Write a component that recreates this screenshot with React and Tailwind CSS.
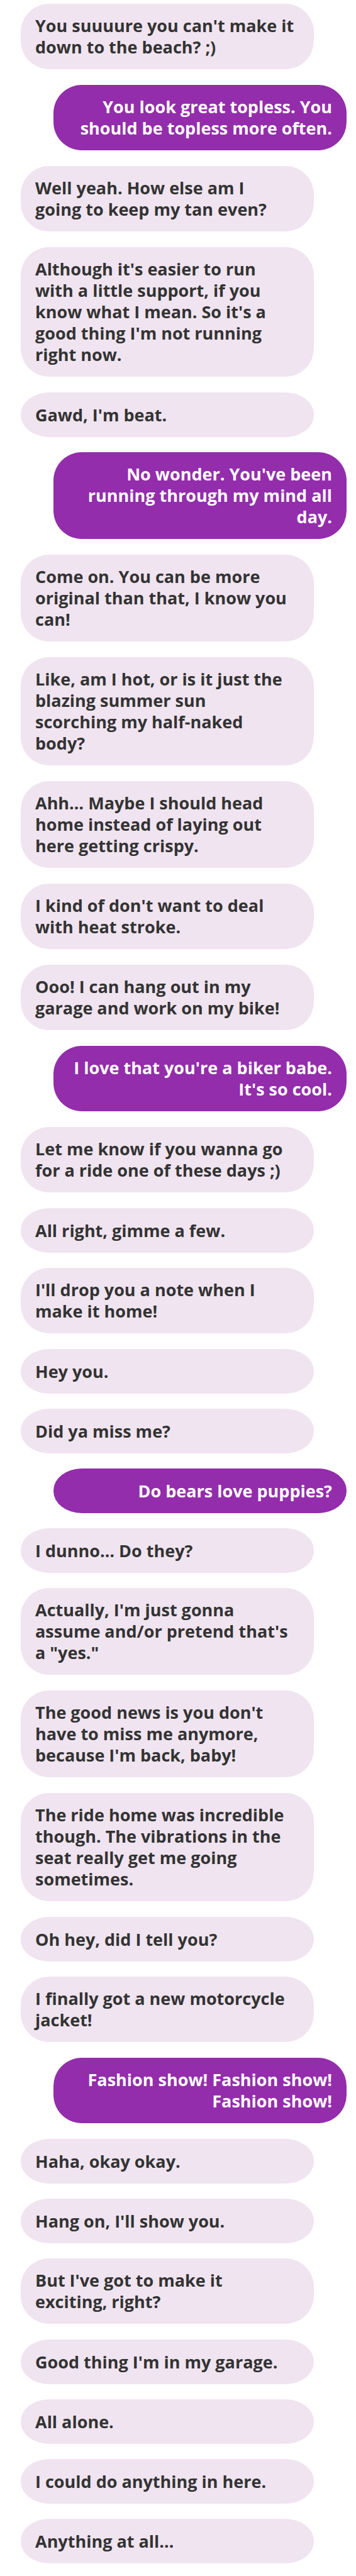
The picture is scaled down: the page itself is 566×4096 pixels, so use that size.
const messages = [
  ["in", "You suuuure you can't make it\ndown to the beach? ;)"],
  ["out", "You look great topless. You\nshould be topless more often."],
  ["in", "Well yeah. How else am I\ngoing to keep my tan even?"],
  ["in", "Although it's easier to run\nwith a little support, if you\nknow what I mean. So it's a\ngood thing I'm not running\nright now."],
  ["in", "Gawd, I'm beat."],
  ["out", "No wonder. You've been\nrunning through my mind all\nday."],
  ["in", "Come on. You can be more\noriginal than that, I know you\ncan!"],
  ["in", "Like, am I hot, or is it just the\nblazing summer sun\nscorching my half-naked\nbody?"],
  ["in", "Ahh… Maybe I should head\nhome instead of laying out\nhere getting crispy."],
  ["in", "I kind of don't want to deal\nwith heat stroke."],
  ["in", "Ooo! I can hang out in my\ngarage and work on my bike!"],
  ["out", "I love that you're a biker babe.\nIt's so cool."],
  ["in", "Let me know if you wanna go\nfor a ride one of these days ;)"],
  ["in", "All right, gimme a few."],
  ["in", "I'll drop you a note when I\nmake it home!"],
  ["in", "Hey you."],
  ["in", "Did ya miss me?"],
  ["out", "Do bears love puppies?"],
  ["in", "I dunno… Do they?"],
  ["in", "Actually, I'm just gonna\nassume and/or pretend that's\na \"yes.\""],
  ["in", "The good news is you don't\nhave to miss me anymore,\nbecause I'm back, baby!"],
  ["in", "The ride home was incredible\nthough. The vibrations in the\nseat really get me going\nsometimes."],
  ["in", "Oh hey, did I tell you?"],
  ["in", "I finally got a new motorcycle\njacket!"],
  ["out", "Fashion show! Fashion show!\nFashion show!"],
  ["in", "Haha, okay okay."],
  ["in", "Hang on, I'll show you."],
  ["in", "But I've got to make it\nexciting, right?"],
  ["in", "Good thing I'm in my garage."],
  ["in", "All alone."],
  ["in", "I could do anything in here."],
  ["in", "Anything at all…"],
];

function Bubble({ side, text }) {
  const single = !text.includes("\n");
  const tone =
    side === "out"
      ? "self-end bg-[#932dab] text-right text-white"
      : "self-start bg-[#f0e4f0] text-[#333333]";
  const shape = single
    ? "mb-6 min-h-[71px] rounded-[45px/35px]"
    : "mb-[25px] rounded-[45px]";
  return (
    <li className={`flex w-[90%] flex-col justify-center px-[23px] py-[18px] last:mb-5 ${tone} ${shape}`}>
      <p className="whitespace-pre-line">{text}</p>
    </li>
  );
}

export default function App() {
  return (
    <main className="bg-white pt-1.5 pr-[15px] pl-[33px] font-['Open_Sans',sans-serif] text-[27px] leading-[34px] font-bold">
      <ul className="flex flex-col">
        {messages.map(([side, text]) => (
          <Bubble key={text} side={side} text={text} />
        ))}
      </ul>
    </main>
  );
}
